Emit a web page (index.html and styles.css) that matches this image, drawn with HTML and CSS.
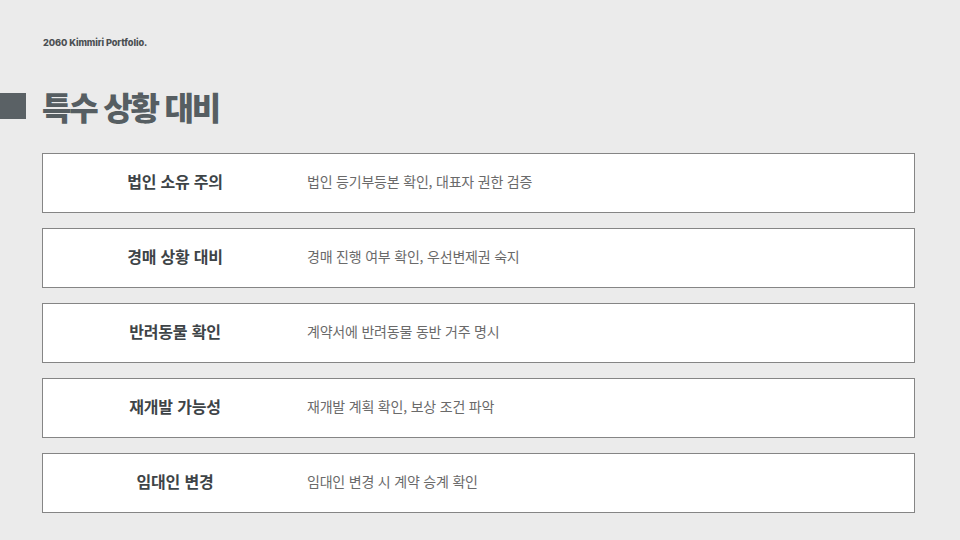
FILE: index.html
```html
<!DOCTYPE html>
<html lang="ko">
<head>
<meta charset="utf-8">
<link rel="stylesheet" href="styles.css">
</head>
<body>
<div class="page">
  <div class="brand">2060 Kimmiri Portfolio.</div>
  <h1 class="title"><span class="mark"></span><span class="title-text">특수 상황 대비</span></h1>
  <div class="rows">
    <div class="row"><div class="label">법인 소유 주의</div><div class="desc">법인 등기부등본 확인, 대표자 권한 검증</div></div>
    <div class="row"><div class="label">경매 상황 대비</div><div class="desc">경매 진행 여부 확인, 우선변제권 숙지</div></div>
    <div class="row"><div class="label">반려동물 확인</div><div class="desc">계약서에 반려동물 동반 거주 명시</div></div>
    <div class="row"><div class="label">재개발 가능성</div><div class="desc">재개발 계획 확인, 보상 조건 파악</div></div>
    <div class="row"><div class="label">임대인 변경</div><div class="desc">임대인 변경 시 계약 승계 확인</div></div>
  </div>
</div>
</body>
</html>
```

FILE: styles.css
```css
* { box-sizing: border-box; }
html, body { margin: 0; padding: 0; }
body {
  width: 960px;
  height: 540px;
  background: #ebebeb;
  font-family: "Noto Sans CJK KR", "Noto Sans", sans-serif;
  overflow: hidden;
}
.page {
  padding: 37px 45px 0 42px;
}
.brand {
  font-family: "Inter", "Noto Sans", sans-serif;
  font-weight: 800;
  font-size: 9.2px;
  line-height: 12px;
  color: #4b5053;
  padding-left: 1px;
  letter-spacing: -0.1px;
}
.title {
  margin: 42px 0 0 -42px;
  display: flex;
  align-items: center;
  gap: 16px;
  height: 30px;
}
.mark {
  width: 26px;
  height: 26px;
  background: #5a6165;
}
.title-text {
  font-size: 32px;
  font-weight: 900;
  color: #565e62;
  line-height: 30px;
  letter-spacing: -2.2px;
}
.rows {
  margin-top: 32px;
  display: flex;
  flex-direction: column;
  gap: 15px;
}
.row {
  height: 60px;
  background: #ffffff;
  border: 1px solid #858585;
  display: flex;
  align-items: center;
  padding-bottom: 4px;
}
.label {
  width: 264px;
  text-align: center;
  font-size: 16px;
  font-weight: 700;
  color: #3e4447;
  letter-spacing: -0.2px;
}
.desc {
  font-size: 14px;
  color: #6a6a6a;
  letter-spacing: -0.2px;
}
```
